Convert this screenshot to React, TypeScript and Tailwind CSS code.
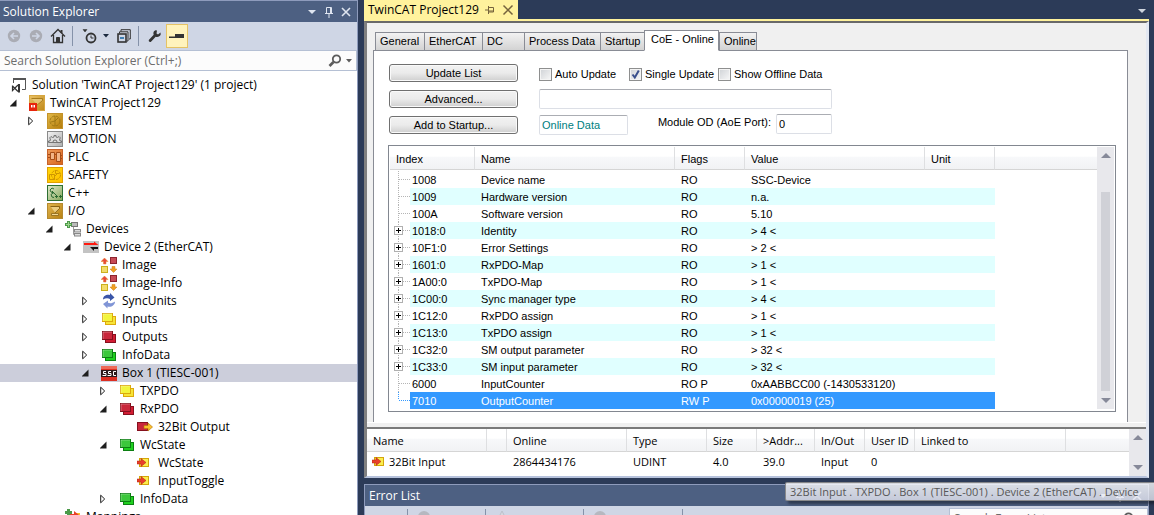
import React from "react";

type IconName =
  | "solution" | "project" | "system" | "motion" | "plc" | "safety" | "cpp" | "io"
  | "devices" | "ethercat" | "image" | "sync" | "yellow" | "red" | "green" | "ssc"
  | "output" | "input" | "mappings";

function Boxes({ fill, light, stroke }: { fill: string; light: string; stroke: string }) {
  return (
    <>
      <rect x="4.5" y="5.5" width="10" height="8" fill={fill} stroke={stroke} />
      <rect x="1.5" y="2.5" width="10" height="8" fill={light} stroke={stroke} />
      <path d="M2 10V3h9" stroke="#fff" strokeOpacity=".35" fill="none" />
    </>
  );
}

function Tile({ top, bottom, stroke, id, children }: { top: string; bottom: string; stroke: string; id: string; children: React.ReactNode }) {
  return (
    <>
      <linearGradient id={id} x1="0" y1="0" x2="1" y2="1">
        <stop offset="0" stopColor={top} />
        <stop offset="1" stopColor={bottom} />
      </linearGradient>
      <rect width="16" height="16" fill={stroke} />
      <rect x="1" y="1" width="14" height="14" fill={`url(#${id})`} />
      {children}
    </>
  );
}

const glyphs: Record<IconName, React.ReactNode> = {
  solution: (
    <>
      <path d="M2.500 6V2.500h12v10H11" fill="#fff" stroke="#555" />
      <path d="M2 2h13" stroke="#555" strokeWidth="2" />
      <path d="M1.500 8.500v5L7 8M1.500 9L7 14.500" fill="none" stroke="#333" strokeWidth="1.200" />
      <path d="M8 7v8.500" stroke="#333" strokeWidth="2" />
    </>
  ),
  project: (
    <>
      <Tile id="gp" top="#e8c064" bottom="#c08a1c" stroke="#d6a640">
        <path d="M2.500 3.500h11v2l-6 5" fill="none" stroke="#a87c1e" />
        <path d="M3 4h10v1.500L8 9.500" fill="#edd08a" fillOpacity=".7" />
      </Tile>
      <rect x="0" y="8" width="8" height="8" fill="#e8240c" />
      <path d="M2 10h1.500v2.500H2zM4.500 10H6v2.500H4.500z" fill="#fff" />
    </>
  ),
  system: (
    <Tile id="gs" top="#e2b846" bottom="#b57d0c" stroke="#c3922a">
      <circle cx="8" cy="8" r="5" fill="none" stroke="#96700f" strokeOpacity=".8" strokeDasharray="3 1" />
      <path d="M8 3v10M8 8l3-3M8 8L4 9" stroke="#96700f" strokeOpacity=".8" fill="none" />
    </Tile>
  ),
  motion: (
    <Tile id="gm" top="#f2f2f2" bottom="#b0b0b0" stroke="#8a8a8a">
      <path d="M1.500 11.500V10h1.500l.5-2-1-1 1.500-1.500 1.500 1L7 6V4.500h2V6l1.500.5 1.500-1L13.500 7l-1 1 .5 2h1.500v1.500z" fill="#dcdcdc" stroke="#6b6b6b" strokeWidth=".9" />
      <path d="M6 11a2 2 0 0 1 4 0" fill="none" stroke="#6b6b6b" />
    </Tile>
  ),
  plc: (
    <Tile id="gl" top="#ed9a5a" bottom="#d9661b" stroke="#c8622a">
      <path d="M3.500 3.500h4v7h-4zM9.500 3.500h4v9h-4zM1 5.500h2M1 8.500h2M7.500 5.500h2M14 6.500h1M14 9.500h1" fill="#f1b486" stroke="#a54d17" />
    </Tile>
  ),
  safety: (
    <Tile id="gy" top="#ffd60a" bottom="#ffc000" stroke="#e0a100">
      <circle cx="9" cy="8" r="4.500" fill="none" stroke="#cf9600" strokeDasharray="3 1" />
      <path d="M2.500 7.500h5v5h-5zM8.500 3v3.500h4M8 9l3-3" stroke="#cf9600" fill="none" />
    </Tile>
  ),
  cpp: (
    <Tile id="gc" top="#dfe8c9" bottom="#86a95e" stroke="#2d6f32">
      <path d="M7 4L5 3 3 5l1 2 3 1M6 8l-2 1.500L5 12l2 .5M5 6l4 4" fill="none" stroke="#2a6a31" />
      <path d="M8 11.500h3M9.500 10v3M12 11.500h3M13.500 10v3" stroke="#2a6a31" />
    </Tile>
  ),
  io: (
    <Tile id="gi" top="#e0b44e" bottom="#b98213" stroke="#b58a30">
      <path d="M3.500 3.500h9v2l-5 5" fill="none" stroke="#8a6414" />
      <path d="M4 4h8v1.500l-4 4" fill="#f3d894" fillOpacity=".8" />
      <path d="M4.500 10.500h7v2h-7z" fill="#f3d894" stroke="#8a6414" strokeWidth=".8" />
    </Tile>
  ),
  devices: (
    <>
      <path d="M8.500 5v8.500H10M8.500 9.500H10" stroke="#999" fill="none" />
      <rect x="6.500" y="1.500" width="6" height="4" fill="#bbb" stroke="#777" />
      <rect x="9.500" y="8.500" width="6" height="2.500" fill="#ddd" stroke="#888" />
      <rect x="9.500" y="12.500" width="6" height="2.500" fill="#ddd" stroke="#888" />
      <path d="M3.500 0v7M0 3.500h7" stroke="#4c9a4a" strokeWidth="3" />
      <path d="M3.500 1v5M1 3.500h5" stroke="#9bd38c" />
    </>
  ),
  ethercat: (
    <>
      <rect y="2" width="16" height="12" fill="#c3c3c3" />
      <path d="M1 4h10V2.500L15.500 6H1z" fill="#ff1a10" />
      <path d="M15 8H7l4 4v-2h4z" fill="#111" />
    </>
  ),
  image: (
    <>
      <path d="M3.500 1L7 4.500H5V7H2.500V4.500H0z" fill="#e8483c" stroke="#e78b2c" strokeWidth=".5" />
      <rect x="9.500" y=".5" width="6" height="6" fill="#c64a55" stroke="#8d2530" />
      <rect x=".5" y="9.500" width="6" height="6" fill="#f3dc6a" stroke="#cbb01e" />
      <path d="M12.500 15.500L9 12h2V9.500h3V12h2z" fill="#f0a024" stroke="#c97d12" strokeWidth=".5" />
    </>
  ),
  sync: (
    <>
      <path d="M2 6.500c0-4 4-5.500 7-4.500V0l4.500 4.500L9 8V6C7 5 4.500 5 2 6.500z" fill="#3a55a8" />
      <path d="M14 8.500c0 4-4 6-7.500 5V15.500L2 11l5-3.500v2.300c2 1 4.500.4 7-1.300z" fill="#8095d6" />
    </>
  ),
  yellow: <Boxes fill="#f7e437" light="#f2f53c" stroke="#dca90c" />,
  red: <Boxes fill="#d21c33" light="#c9273c" stroke="#85101e" />,
  green: <Boxes fill="#1fd01f" light="#3cc83c" stroke="#0c7f12" />,
  ssc: (
    <>
      <rect width="16" height="15" y="1" fill="#dc2f22" />
      <rect y="1" width="16" height="3" fill="#ee6a58" />
      <rect y="5" width="16" height="7" fill="#2b1a1a" />
      <path d="M5 6.500H2.500v2H5v2H1.500M10 6.500H7.500v2H10v2H6.500M15 6.500h-2.500v4H15" stroke="#fff" fill="none" />
    </>
  ),
  output: (
    <>
      <rect x=".5" y="3.500" width="10" height="8" fill="#c9273c" stroke="#85101e" />
      <path d="M7 6.500h4V4l4.500 4-4.500 4V9.500H7z" fill="#fbc22c" stroke="#b9770f" strokeWidth=".7" />
    </>
  ),
  input: (
    <>
      <rect x="2.500" y="3.500" width="9" height="8" fill="#fbee4e" stroke="#d4a50c" />
      <path d="M0 6h4V3.500L9 7.500l-5 4V9H0z" fill="#e8402c" stroke="#b3200f" strokeWidth=".5" />
    </>
  ),
  mappings: (
    <>
      <path d="M3.500 0v7M0 3.500h7" stroke="#4c9a4a" strokeWidth="3" />
      <rect x="9" y="4" width="6" height="7" fill="#fbc22c" />
      <path d="M5 5h4V2l5 4-5 4V8H5z" fill="#e8402c" />
    </>
  ),
};

function Glyph({ name }: { name: IconName }) {
  return (
    <svg viewBox="0 0 16 16" className="ml-px size-4 shrink-0" aria-hidden="true">
      {glyphs[name]}
    </svg>
  );
}

type Node = { level: number; icon: IconName; label: string; state?: "open" | "closed"; selected?: boolean };

const nodes: Node[] = [
  { level: 0, icon: "solution", label: "Solution 'TwinCAT Project129' (1 project)" },
  { level: 1, icon: "project", label: "TwinCAT Project129", state: "open" },
  { level: 2, icon: "system", label: "SYSTEM", state: "closed" },
  { level: 2, icon: "motion", label: "MOTION" },
  { level: 2, icon: "plc", label: "PLC" },
  { level: 2, icon: "safety", label: "SAFETY" },
  { level: 2, icon: "cpp", label: "C++" },
  { level: 2, icon: "io", label: "I/O", state: "open" },
  { level: 3, icon: "devices", label: "Devices", state: "open" },
  { level: 4, icon: "ethercat", label: "Device 2 (EtherCAT)", state: "open" },
  { level: 5, icon: "image", label: "Image" },
  { level: 5, icon: "image", label: "Image-Info" },
  { level: 5, icon: "sync", label: "SyncUnits", state: "closed" },
  { level: 5, icon: "yellow", label: "Inputs", state: "closed" },
  { level: 5, icon: "red", label: "Outputs", state: "closed" },
  { level: 5, icon: "green", label: "InfoData", state: "closed" },
  { level: 5, icon: "ssc", label: "Box 1 (TIESC-001)", state: "open", selected: true },
  { level: 6, icon: "yellow", label: "TXPDO", state: "closed" },
  { level: 6, icon: "red", label: "RxPDO", state: "open" },
  { level: 7, icon: "output", label: "32Bit Output" },
  { level: 6, icon: "green", label: "WcState", state: "open" },
  { level: 7, icon: "input", label: "WcState" },
  { level: 7, icon: "input", label: "InputToggle" },
  { level: 6, icon: "green", label: "InfoData", state: "closed" },
  { level: 3, icon: "mappings", label: "Mappings" },
];

function TreeRow({ node }: { node: Node }) {
  return (
    <li
      role="treeitem"
      aria-level={node.level + 1}
      aria-selected={!!node.selected}
      className={`flex h-[18px] shrink-0 items-center pl-[10px] ${node.selected ? "bg-[#cccedb]" : ""}`}
    >
      {Array.from({ length: Math.max(0, node.level - 1) }, (_, i) => (
        <span key={i} className="w-[18px] shrink-0" />
      ))}
      {node.level > 0 && (
        <span className="flex w-[18px] shrink-0">
          {node.state && (
            <button type="button" aria-label={`Toggle ${node.label}`}>
              <svg viewBox="0 0 8 10" className="h-[10px] w-2">
                {node.state === "open" ? (
                  <path d="M6.500 1.500v7h-7z" fill="#1e1e1e" />
                ) : (
                  <path d="M.7 1.200v7.600L4.700 5z" fill="#fff" stroke="#1e1e1e" />
                )}
              </svg>
            </button>
          )}
        </span>
      )}
      <Glyph name={node.icon} />
      <span className="ml-[5px] whitespace-nowrap">{node.label}</span>
    </li>
  );
}

function PanelButtons({ color }: { color: string }) {
  return (
    <div className="flex items-center gap-[5px]">
      <button type="button" aria-label="Window position">
        <svg width="12" height="12" viewBox="0 0 12 12"><path d="M2 4h8L6 8z" fill={color} /></svg>
      </button>
      <button type="button" aria-label="Auto hide">
        <svg width="12" height="12" viewBox="0 0 12 12" fill="none" stroke={color}>
          <path d="M3.500 7V1.500h5V7M7.500 1.500V7M2 7.500h8M6 8v4" />
        </svg>
      </button>
      <button type="button" aria-label="Close">
        <svg width="12" height="12" viewBox="0 0 12 12" stroke={color} strokeWidth="1.600"><path d="M2 2l8 8M10 2l-8 8" /></svg>
      </button>
    </div>
  );
}

function SearchGlass() {
  return (
    <svg width="14" height="14" viewBox="0 0 14 14" fill="none" stroke="#5c5c5c">
      <circle cx="8.500" cy="5" r="3.700" strokeWidth="1.800" />
      <path d="M5.500 8L1.500 12" strokeWidth="2.600" />
    </svg>
  );
}

function Explorer() {
  return (
    <aside className="flex w-[358px] shrink-0 flex-col border-r border-[#8e9bbc] bg-white text-xs text-black">
      <header className="flex h-[22px] shrink-0 items-center justify-between border-t border-[#8e9bbc] bg-[#4d6082] pr-[5px] pl-[3px] text-white">
        <h2>Solution Explorer</h2>
        <PanelButtons color="#dfe5f0" />
      </header>
      <div className="flex h-[28px] shrink-0 items-center bg-[#cfd6e5] pl-[7px]">
        <button type="button" aria-label="Back" className="mr-[8px]">
          <svg width="14" height="14" viewBox="0 0 14 14"><circle cx="7" cy="7" r="6.200" fill="#aaacb4" /><path d="M11 7H4M7 4L4 7l3 3" stroke="#cfd6e5" strokeWidth="1.600" fill="none" /></svg>
        </button>
        <button type="button" aria-label="Forward" className="mr-[7px]">
          <svg width="14" height="14" viewBox="0 0 14 14"><circle cx="7" cy="7" r="6.200" fill="#aaacb4" /><path d="M3 7h7M7 4l3 3-3 3" stroke="#cfd6e5" strokeWidth="1.600" fill="none" /></svg>
        </button>
        <button type="button" aria-label="Home" className="mr-[6px]">
          <svg width="16" height="16" viewBox="0 0 16 16" fill="none" stroke="#333"><path d="M1 8.500L8 1.500l7 7M3.500 7v7.500h9V7" strokeWidth="1.300" /><path d="M11.500 2v3" strokeWidth="2" /><path d="M6.500 9.500h3v5h-3z" fill="#333" /></svg>
        </button>
        <span className="mr-[9px] h-5 w-px bg-[#8592a9]" />
        <button type="button" aria-label="Pending changes filter" className="mr-[6px]">
          <svg width="15" height="15" viewBox="0 0 15 15" fill="none" stroke="#333"><path d="M1 .5h4L3 3z" fill="#333" strokeWidth=".5" /><circle cx="9" cy="9" r="4.500" strokeWidth="1.800" /><path d="M9 6.500V9h2.500" /></svg>
        </button>
        <button type="button" aria-label="Filter options" className="mr-[8px]">
          <svg width="6" height="4" viewBox="0 0 6 4"><path d="M0 0h6L3 3.500z" fill="#1b293e" /></svg>
        </button>
        <button type="button" aria-label="Collapse all" className="mr-[7px]">
          <svg width="14" height="14" viewBox="0 0 14 14" fill="none" stroke="#333"><path d="M4 2.500V.7h9.300V10h-1.300M2.500 4.500V2.800H11V12H9.500" /><rect x="1" y="5" width="8" height="8" strokeWidth="1.600" /><path d="M3 9h4" stroke="#005a9e" strokeWidth="1.400" /></svg>
        </button>
        <span className="mr-[9px] h-5 w-px bg-[#8592a9]" />
        <button type="button" aria-label="Properties" className="mr-[4px]">
          <svg width="14" height="14" viewBox="0 0 14 14"><path d="M12.500 3.500L10 5.500 8.500 4.500l.5-3L7.500 1.300C5.500 2 5 4 5.700 5.800L1 10.700c-1 1.200.8 3 2 2l4.700-4.900c2 .7 4.500-.3 5-2.300z" fill="#333" /></svg>
        </button>
        <button type="button" aria-label="Preview selected items" className="flex h-6 w-[22px] items-center justify-center border border-[#e5c365] bg-[#fff3bc]">
          <svg width="16" height="6" viewBox="0 0 16 6"><path d="M0 3.500h6V1h9v4H0z" fill="#333" /></svg>
        </button>
      </div>
      <div className="mb-[2px] flex h-[21px] shrink-0 items-center border border-l-0 border-[#b5c0d4] bg-[#fcfcfc] pr-[4px] pl-[4px]">
        <input aria-label="Search Solution Explorer" placeholder="Search Solution Explorer (Ctrl+;)" className="min-w-0 flex-1 bg-transparent outline-none placeholder:text-[#6d6d6d]" />
        <SearchGlass />
        <svg width="6" height="4" viewBox="0 0 6 4" className="ml-[4px]"><path d="M0 0h6L3 3.500z" fill="#5c5c5c" /></svg>
      </div>
      <ul role="tree" className="flex min-h-0 flex-1 flex-col overflow-hidden pt-[3px]">
        {nodes.map((n, i) => <TreeRow key={i} node={n} />)}
      </ul>
    </aside>
  );
}

const tabs = [
  { label: "General", width: "w-[49px]" },
  { label: "EtherCAT", width: "w-[58px]" },
  { label: "DC", width: "w-[42px]" },
  { label: "Process Data", width: "w-[76px]" },
  { label: "Startup", width: "w-[44px]" },
  { label: "CoE - Online", width: "w-[75px]", active: true },
  { label: "Online", width: "w-[38px]" },
];

const objects: [string, string, string, string, boolean?][] = [
  ["1008", "Device name", "RO", "SSC-Device"],
  ["1009", "Hardware version", "RO", "n.a."],
  ["100A", "Software version", "RO", "5.10"],
  ["1018:0", "Identity", "RO", "> 4 <", true],
  ["10F1:0", "Error Settings", "RO", "> 2 <", true],
  ["1601:0", "RxPDO-Map", "RO", "> 1 <", true],
  ["1A00:0", "TxPDO-Map", "RO", "> 1 <", true],
  ["1C00:0", "Sync manager type", "RO", "> 4 <", true],
  ["1C12:0", "RxPDO assign", "RO", "> 1 <", true],
  ["1C13:0", "TxPDO assign", "RO", "> 1 <", true],
  ["1C32:0", "SM output parameter", "RO", "> 32 <", true],
  ["1C33:0", "SM input parameter", "RO", "> 32 <", true],
  ["6000", "InputCounter", "RO P", "0xAABBCC00 (-1430533120)"],
  ["7010", "OutputCounter", "RW P", "0x00000019 (25)"],
];

function Branch({ expandable, last }: { expandable?: boolean; last: boolean }) {
  return (
    <svg width="20" height="17" viewBox="0 0 20 17" className="shrink-0 bg-white" fill="none">
      <path d={last ? "M8.500 0v8" : "M8.500 0v17"} stroke={last ? "#3399ff" : "#b5b5b5"} strokeDasharray="1 1" />
      <path d="M9 8.500h11" stroke={last ? "#3399ff" : "#b5b5b5"} strokeDasharray="1 1" />
      {expandable && (
        <>
          <rect x="4.500" y="4.500" width="8" height="8" fill="#fff" stroke="#b0b0b0" />
          <path d="M6 8.500h5M8.500 6v5" stroke="#000" />
        </>
      )}
    </svg>
  );
}

function CheckBox({ label, checked }: { label: string; checked?: boolean }) {
  return (
    <label className="flex items-center gap-[3px] leading-[13px] whitespace-nowrap">
      <span className="relative size-[13px]">
        <input type="checkbox" defaultChecked={checked} className="peer block size-[13px] appearance-none border border-[#8e8f8f] bg-linear-to-br from-[#cfd2d6] to-[#f8f8f8] shadow-[inset_0_0_0_1px_#f4f4f4]" />
        <svg viewBox="0 0 13 13" className="pointer-events-none absolute inset-0 hidden peer-checked:block">
          <path d="M3.500 6.500l2.300 3L9.800 2.500" fill="none" stroke="#3a4f8c" strokeWidth="2" />
        </svg>
      </span>
      {label}
    </label>
  );
}

function ScrollBar({ thumb }: { thumb?: boolean }) {
  return (
    <div className="flex w-[17px] shrink-0 flex-col items-center justify-between bg-[#e8e8ec] py-[5px]">
      <svg width="10" height="6" viewBox="0 0 10 6"><path d="M0 6h10L5 1z" fill="#868999" /></svg>
      {thumb && <div className="mt-[34px] mb-[7px] w-[9px] flex-1 bg-[#d0d1d7]" />}
      <svg width="10" height="6" viewBox="0 0 10 6"><path d="M0 0h10L5 5z" fill="#868999" /></svg>
    </div>
  );
}

const headGradient = "bg-linear-to-b from-white from-40% via-[#f7f8fa] via-45% to-[#f1f2f4]";
const headCell = "border-r border-b border-r-[#dedfe1] border-b-[#d5d5d5] pt-[2px] pr-0 pb-0 pl-[6px] text-left font-normal whitespace-nowrap";
const headEnd = "border-b border-b-[#d5d5d5] p-0";
const bodyCell = "pt-px pr-0 pb-0 pl-[6px] leading-[16px] whitespace-nowrap";

function ObjectTable() {
  return (
    <div className="flex w-full border border-[#828790] bg-white p-px pb-[2px]">
      <div className="min-w-0 flex-1 overflow-hidden">
        <table className="w-full table-fixed border-separate border-spacing-0">
          <colgroup>
            <col className="w-[85px]" /><col className="w-[200px]" /><col className="w-[70px]" />
            <col className="w-[180px]" /><col className="w-[70px]" /><col />
          </colgroup>
          <thead>
            <tr className={`h-[23px] ${headGradient}`}>
              {["Index", "Name", "Flags", "Value", "Unit"].map((h) => <th key={h} className={headCell}>{h}</th>)}
              <th className={headEnd} />
            </tr>
          </thead>
          <tbody>
            <tr className="h-px"><td colSpan={6} className="p-0" /></tr>
            {objects.map(([index, name, flags, value, expandable], i) => {
              const last = i === objects.length - 1;
              const tone = last ? "bg-[#3399ff] text-white" : i % 2 ? "bg-[#e0ffff]" : "bg-white";
              return (
                <tr key={index} className="h-[17px]">
                  <td className={`p-0 ${tone}`}>
                    <div className="flex"><Branch expandable={expandable} last={last} /><span className="pt-px pl-[2px] leading-[16px]">{index}</span></div>
                  </td>
                  <td className={`${bodyCell} ${tone}`}>{name}</td>
                  <td className={`${bodyCell} ${tone}`}>{flags}</td>
                  <td className={`${bodyCell} ${tone}`}>{value}</td>
                  <td className={`p-0 ${tone}`} />
                  <td className="p-0" />
                </tr>
              );
            })}
          </tbody>
        </table>
      </div>
      <ScrollBar thumb />
    </div>
  );
}

const actionClass = "h-[18px] w-full rounded-[3px] border border-[#707070] bg-linear-to-b from-[#f2f2f2] via-[#ebebeb] to-[#cfcfcf] leading-[15px] shadow-[inset_0_0_0_1px_#fafafa]";
const fieldClass = "h-5 rounded-[2px] border border-[#dcdfe6] border-t-[#abadb3] bg-white px-[2px] outline-none";

function CoePage() {
  return (
    <div className="min-h-0 flex-1 overflow-hidden bg-[#f0f0f0] pt-[7px] pr-[18px] pl-[6px] font-['Liberation_Sans',sans-serif] text-[11px] text-black">
      <div role="tablist" className="relative z-10 -mb-px flex h-[21px] items-end pl-[2px]">
        {tabs.map((t) => (
          <button
            key={t.label}
            type="button"
            role="tab"
            aria-selected={!!t.active}
            className={`border border-[#898c95] text-left whitespace-nowrap ${t.width} ${t.active ? "h-[21px] border-b-white bg-white pb-[2px] pl-[6px]" : "h-[19px] border-r-0 bg-linear-to-b from-[#f2f2f2] to-[#d3d3d3] pl-[4px] last:border-r"}`}
          >
            {t.label}
          </button>
        ))}
      </div>
      <div role="tabpanel" className="h-full border border-[#898c95] bg-white pt-[13px] pr-[11px] pl-[15px]">
        <div className="flex gap-[21px]">
          <div className="flex w-[129px] flex-col gap-2">
            <button type="button" className={actionClass}>Update List</button>
            <button type="button" className={actionClass}>Advanced...</button>
            <button type="button" className={actionClass}>Add to Startup...</button>
          </div>
          <div className="flex w-[293px] flex-col pt-[4px]">
            <div className="grid grid-cols-[90px_89px_1fr]">
              <CheckBox label="Auto Update" />
              <CheckBox label="Single Update" checked />
              <CheckBox label="Show Offline Data" />
            </div>
            <input aria-label="Status" className={`mt-[8px] w-full ${fieldClass}`} />
            <div className="mt-[5px] flex items-start">
              <input aria-label="Data source" defaultValue="Online Data" className={`mt-px w-[89px] text-[#008080] ${fieldClass}`} />
              <label htmlFor="aoe-port" className="mr-[5px] ml-auto leading-[16px] whitespace-nowrap">Module OD (AoE Port):</label>
              <input id="aoe-port" defaultValue="0" className={`w-[56px] ${fieldClass}`} />
            </div>
          </div>
        </div>
        <div className="mt-[10px] -ml-px">
          <ObjectTable />
        </div>
      </div>
    </div>
  );
}

function VariableTable() {
  return (
    <div className="flex h-[49px] shrink-0 border-t-2 border-[#7a7a7a] bg-white">
      <div className="min-w-0 flex-1">
        <table className="w-full table-fixed border-separate border-spacing-0 text-[11px]">
          <colgroup>
            <col className="w-[120px]" /><col className="w-[20px]" /><col className="w-[120px]" /><col className="w-[80px]" />
            <col className="w-[50px]" /><col className="w-[58px]" /><col className="w-[50px]" /><col className="w-[50px]" />
            <col className="w-[151px]" /><col />
          </colgroup>
          <thead>
            <tr className={`h-[23px] ${headGradient}`}>
              {["Name", "", "Online", "Type", "Size", ">Addr...", "In/Out", "User ID", "Linked to"].map((h) => <th key={h} className={headCell}>{h}</th>)}
              <th className={headEnd} />
            </tr>
          </thead>
          <tbody>
            <tr className="h-5 *:py-0 *:pr-0 *:pl-[6px]">
              <td><div className="-ml-[2px] flex items-center gap-px"><Glyph name="input" />32Bit Input</div></td>
              <td />
              <td>2864434176</td>
              <td>UDINT</td>
              <td>4.0</td>
              <td>39.0</td>
              <td>Input</td>
              <td>0</td>
              <td /><td />
            </tr>
          </tbody>
        </table>
      </div>
      <ScrollBar />
    </div>
  );
}

function ErrorList() {
  return (
    <section className="relative mr-[5px] ml-[-1px] h-[31px] shrink-0 overflow-hidden border border-b-0 border-[#8e9bbc] bg-[#cfd6e5] text-xs">
      <header className="flex h-[21px] items-center justify-between bg-[#4d6082] pr-[5px] pl-[4px] text-white">
        <h2>Error List</h2>
        <PanelButtons color="#dfe5f0" />
      </header>
      <div className="flex items-start pl-[42px]">
        <span className="mt-[3px] mr-[10px] h-5 w-px bg-[#8592a9]" />
        <span className="mt-[5px] mr-[55px] size-3 rounded-full bg-[#b5b8c0]" />
        <span className="mt-[3px] mr-[10px] h-5 w-px bg-[#8592a9]" />
        <svg width="12" height="12" viewBox="0 0 12 12" className="mt-[4px] mr-[75px]"><path d="M6 1l5 10H1z" fill="#d5d9e0" stroke="#bbc0ca" /></svg>
        <span className="mt-[3px] mr-[10px] h-5 w-px bg-[#8592a9]" />
        <span className="mt-[5px] mr-[76px] size-3 rounded-full bg-[#b5b8c0]" />
        <span className="mt-[3px] h-5 w-px bg-[#8592a9]" />
        <div className="mt-[2px] ml-auto flex h-[21px] w-[199px] items-center border border-[#b5c0d4] bg-[#fcfcfc] pr-[13px] pl-[4px]">
          <input aria-label="Search Error List" placeholder="Search Error List" className="min-w-0 flex-1 bg-transparent outline-none placeholder:text-[#6d6d6d]" />
          <SearchGlass />
        </div>
      </div>
    </section>
  );
}

export default function App() {
  return (
    <div className="relative flex h-screen w-full overflow-hidden bg-[#2c3b58] font-['Open_Sans','Noto_Sans',sans-serif]">
      <Explorer />
      <main className="flex min-w-0 flex-1 flex-col pl-[7px]">
        <div className="ml-[-1px] flex h-[19px] shrink-0 items-stretch justify-between pr-[8px] text-xs">
          <div className="flex w-[154px] items-center justify-between bg-[#fff29d] pr-[4px] pl-[4px] text-black">
            <span className="whitespace-nowrap">TwinCAT Project129</span>
            <span className="flex items-center gap-[8px]">
              <button type="button" aria-label="Pin tab">
                <svg width="9" height="8" viewBox="0 0 9 8" fill="none" stroke="#75633d"><path d="M0 4h3M3.500 0v8M4 1.500h4.500v4.500H4M4 5h4" /></svg>
              </button>
              <button type="button" aria-label="Close tab">
                <svg width="12" height="12" viewBox="0 0 12 12" stroke="#75633d" strokeWidth="1.500"><path d="M1.500 1.500l9 9M10.500 1.500l-9 9" /></svg>
              </button>
            </span>
          </div>
          <button type="button" aria-label="Active files" className="mt-[4px]">
            <svg width="8" height="5" viewBox="0 0 8 5"><path d="M0 0h8L4 4z" fill="#ced4dd" /></svg>
          </button>
        </div>
        <div className="mr-[5px] ml-[-1px] flex min-h-0 flex-1 flex-col border-t-2 border-[#fff29d]">
          <div className="flex min-h-0 flex-1 flex-col border-t-2 border-r-3 border-b-2 border-l-3 border-t-[#696969] border-r-[#e3e8f2] border-b-[#b6c2dc] border-l-[#808080]">
            <CoePage />
            <div className="h-[5px] shrink-0 border-t border-white bg-[#f0f0f0]" />
            <VariableTable />
          </div>
        </div>
        <div className="h-[6px] shrink-0" />
        <ErrorList />
      </main>
      <div role="tooltip" className="absolute top-[482px] right-0 left-[785px] h-[19px] rounded-l-[2px] border border-r-0 border-[#767676]/80 bg-linear-to-b from-[#ffffff]/80 to-[#e4e5f0]/80 pl-[4px] text-[11px] leading-[17px] whitespace-nowrap text-[#575757] shadow-[3px_3px_3px_rgba(0,0,0,0.4)]">
        32Bit Input . TXPDO . Box 1 (TIESC-001) . Device 2 (EtherCAT) . Device
      </div>
    </div>
  );
}
